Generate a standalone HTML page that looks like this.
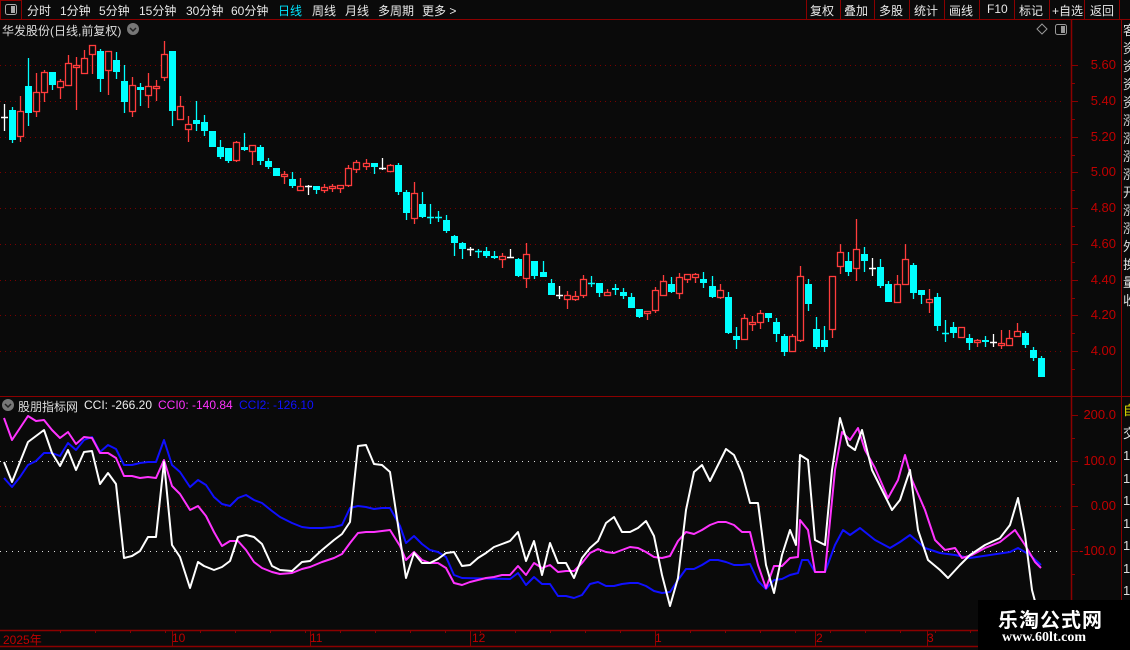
<!DOCTYPE html>
<html><head><meta charset="utf-8">
<style>
*{margin:0;padding:0;box-sizing:border-box}
body{width:1130px;height:650px;background:#0a0a0a;overflow:hidden;position:relative;font-family:"Liberation Sans","Noto Sans CJK SC",sans-serif;font-size:12px;color:#e8e8e8}
.t{position:absolute;white-space:nowrap}
svg{position:absolute;left:0;top:0}
</style></head><body>
<svg width="1130" height="650" id="s">
<!-- frame lines -->
<line x1="0" y1="19.5" x2="1130" y2="19.5" stroke="#8b0000"/>
<line x1="1071.5" y1="19" x2="1071.5" y2="646" stroke="#8b0000" stroke-width="1.5"/>
<line x1="1121.5" y1="19" x2="1121.5" y2="630" stroke="#8b0000"/>
<line x1="0" y1="396.5" x2="1130" y2="396.5" stroke="#8b0000"/>
<line x1="0" y1="630.5" x2="1130" y2="630.5" stroke="#8b0000" stroke-width="1.5"/>
<line x1="0" y1="646.5" x2="1130" y2="646.5" stroke="#8b0000" stroke-width="1.5"/>
<rect x="0.5" y="0.5" width="21" height="19" fill="none" stroke="#8b0000"/>
<rect x="5.5" y="4.5" width="11" height="10" rx="2" fill="none" stroke="#aaa"/>
<rect x="11" y="6" width="4" height="7" fill="#aaa"/>
<!-- right toolbar separators -->
<g stroke="#8b0000">
<line x1="806.5" y1="0" x2="806.5" y2="19"/><line x1="840.5" y1="0" x2="840.5" y2="19"/><line x1="874.5" y1="0" x2="874.5" y2="19"/><line x1="909.5" y1="0" x2="909.5" y2="19"/><line x1="944.5" y1="0" x2="944.5" y2="19"/><line x1="979.5" y1="0" x2="979.5" y2="19"/><line x1="1014.5" y1="0" x2="1014.5" y2="19"/><line x1="1049.5" y1="0" x2="1049.5" y2="19"/><line x1="1084.5" y1="0" x2="1084.5" y2="19"/><line x1="1119.5" y1="0" x2="1119.5" y2="19"/>
</g>
<!-- title icons -->
<circle cx="133" cy="29" r="6" fill="#777"/><path d="M130 28 L133 31 L136 28" stroke="#222" stroke-width="1.5" fill="none"/>
<path d="M1042 24 L1047 29 L1042 34 L1037 29 Z" fill="none" stroke="#999"/>
<rect x="1055.5" y="24.5" width="11" height="10" rx="2" fill="none" stroke="#999"/><rect x="1061" y="26" width="4" height="7" fill="#999"/>
<circle cx="8" cy="405" r="6" fill="#777"/><path d="M5 404 L8 407 L11 404" stroke="#222" stroke-width="1.5" fill="none"/>
<g id="grid"></g>
<g id="candles"></g>
<g id="ind" fill="none" stroke-width="2" stroke-linejoin="round"></g>
</svg>

<div class="t" style="left:27px;top:2px">分时</div>
<div class="t" style="left:60px;top:2px">1分钟</div>
<div class="t" style="left:99px;top:2px">5分钟</div>
<div class="t" style="left:139px;top:2px">15分钟</div>
<div class="t" style="left:186px;top:2px">30分钟</div>
<div class="t" style="left:231px;top:2px">60分钟</div>
<div class="t" style="left:278px;top:2px;color:#00e5ff">日线</div>
<div class="t" style="left:312px;top:2px">周线</div>
<div class="t" style="left:345px;top:2px">月线</div>
<div class="t" style="left:378px;top:2px">多周期</div>
<div class="t" style="left:422px;top:2px">更多 &gt;</div>
<div class="t" style="left:810px;top:2px">复权</div>
<div class="t" style="left:844px;top:2px">叠加</div>
<div class="t" style="left:879px;top:2px">多股</div>
<div class="t" style="left:914px;top:2px">统计</div>
<div class="t" style="left:949px;top:2px">画线</div>
<div class="t" style="left:987px;top:2px">F10</div>
<div class="t" style="left:1019px;top:2px">标记</div>
<div class="t" style="left:1052px;top:2px">+自选</div>
<div class="t" style="left:1090px;top:2px">返回</div>
<div class="t" style="left:2px;top:22px;color:#ddd">华发股份(日线,前复权)</div>
<div class="t" style="left:18px;top:398px;color:#ddd">股朋指标网</div>
<div class="t" style="left:84px;top:398px;color:#eee">CCI: -266.20</div>
<div class="t" style="left:158px;top:398px;color:#ff33ff">CCI0: -140.84</div>
<div class="t" style="left:239px;top:398px;color:#1010ff">CCI2: -126.10</div>

<div id="axis"></div>
<div class="t" style="left:1123px;top:22px;color:#ddd;font-size:13px;line-height:18px;width:7px;overflow:hidden">客<br>资<br>资<br>资<br>资<br>涨<br>涨<br>涨<br>涨<br>开<br>涨<br>涨<br>外<br>换<br>量<br>收</div>
<div class="t" style="left:1123px;top:400px;color:#ddd;font-size:13px;line-height:22.5px;width:7px;overflow:hidden"><span style="color:#e0e000">自</span><br>交<br>1<br>1<br>1<br>1<br>1<br>1<br>1<br>1</div>

<div class="t" style="left:3px;top:631px;color:#c00000;font-size:12px">2025年</div>
<div class="t" style="left:172px;top:631px;color:#c00000">10</div>
<div class="t" style="left:310px;top:631px;color:#c00000">11</div>
<div class="t" style="left:472px;top:631px;color:#c00000">12</div>
<div class="t" style="left:655px;top:631px;color:#c00000">1</div>
<div class="t" style="left:816px;top:631px;color:#c00000">2</div>
<div class="t" style="left:927px;top:631px;color:#c00000">3</div>

<div style="position:absolute;left:978px;top:600px;width:152px;height:50px;background:#000">
<div class="t" style="left:20px;top:4px;font-size:20px;font-weight:bold;color:#fff;letter-spacing:1px">乐淘公式网</div>
<div class="t" style="left:24px;top:30px;font-family:'Liberation Serif',serif;font-weight:bold;font-size:14px;color:#fff">www.60lt.com</div>
</div>

<script>
var NS="http://www.w3.org/2000/svg";
function el(p,n,a){var e=document.createElementNS(NS,n);for(var k in a)e.setAttribute(k,a[k]);p.appendChild(e);return e;}
var g=document.getElementById('grid');
var py=[65,101,137,172,208,244,280,315,351],pl=["5.60","5.40","5.20","5.00","4.80","4.60","4.40","4.20","4.00"];
var ax=document.getElementById('axis'),h="";
py.forEach(function(y,i){el(g,'line',{x1:0,y1:y+.5,x2:1062,y2:y+.5,stroke:'#7a0000','stroke-dasharray':'1 4'});
el(g,'line',{x1:1071,y1:y+.5,x2:1078,y2:y+.5,stroke:'#8b0000'});el(g,'line',{x1:1071,y1:y+18.5,x2:1075,y2:y+18.5,stroke:'#8b0000'});
h+='<div class="t" style="left:1070px;width:46px;text-align:right;top:'+(y-8)+'px;color:#c00000;font-size:13px">'+pl[i]+'</div>';});
var iy=[415,461,506,551],il=["200.0","100.0","0.00","-100.0"];
iy.forEach(function(y,i){el(g,'line',{x1:1071,y1:y+.5,x2:1078,y2:y+.5,stroke:'#8b0000'});el(g,'line',{x1:1071,y1:y+23.5,x2:1075,y2:y+23.5,stroke:'#8b0000'});
h+='<div class="t" style="left:1060px;width:56px;text-align:right;top:'+(y-8)+'px;color:#c00000;font-size:13px">'+il[i]+'</div>';});
ax.innerHTML=h;
el(g,'line',{x1:0,y1:461.5,x2:1062,y2:461.5,stroke:'#ddd','stroke-dasharray':'1 5'});
el(g,'line',{x1:0,y1:551.5,x2:1062,y2:551.5,stroke:'#ddd','stroke-dasharray':'1 5'});
el(g,'line',{x1:0,y1:506.5,x2:1062,y2:506.5,stroke:'#7a0000','stroke-dasharray':'1 4'});
[172,310,470,655,815,927].forEach(function(x){el(g,'line',{x1:x+.5,y1:630,x2:x+.5,y2:646,stroke:'#8b0000'});});
for(var x=60;x<1060;x+=35)el(g,'line',{x1:x+.5,y1:630,x2:x+.5,y2:633,stroke:'#8b0000'});
// candles: x,type(c cyan,r red,w white),bodyTop,bodyBot,wickTop,wickBot
var C=[[4,'w',117,117,104,131],[12,'c',110,140,107,143],[20,'r',111,136,96,142],[28,'c',86,113,58,126],[36,'r',92,111,73,117],[44,'r',72,92,70,102],[52,'c',72,85,72,90],[60,'r',81,87,79,99],[68,'r',63,85,55,85],[76,'r',65,67,57,110],[84,'r',58,73,50,74],[92,'r',45,54,45,74],[100,'c',51,79,49,92],[108,'r',51,70,51,95],[116,'c',60,72,52,79],[124,'c',81,102,65,113],[132,'r',85,111,77,117],[140,'c',87,90,83,106],[148,'r',86,95,73,108],[156,'r',86,88,80,101],[164,'r',54,77,41,81],[172,'c',51,111,51,126],[180,'r',106,119,96,119],[188,'r',124,129,116,142],[196,'c',120,124,101,131],[204,'c',122,131,115,136],[212,'c',131,147,131,147],[220,'c',147,157,140,159],[228,'c',148,161,148,163],[236,'r',142,160,141,162],[244,'c',147,150,133,151],[252,'r',145,151,145,165],[260,'c',147,161,145,165],[268,'c',161,167,158,169],[276,'c',168,176,168,176],[284,'r',174,176,171,184],[292,'c',179,186,172,188],[300,'r',186,190,178,190],[308,'w',186,186,185,195],[316,'c',186,190,186,194],[324,'r',187,190,184,193],[332,'r',186,188,184,192],[340,'r',185,188,185,193],[348,'r',168,185,165,187],[356,'r',162,169,160,173],
[366,'r',163,166,159,170],[374,'c',163,167,163,174],[382,'w',168,168,158,170],[390,'r',165,171,164,171],[398,'c',165,192,163,195],[406,'c',192,213,190,220],[414,'r',193,218,182,224],[422,'c',204,217,192,218],[430,'c',217,218,204,224],[438,'c',217,218,211,222],[446,'c',220,231,215,233],[454,'c',236,243,235,256],[462,'c',243,249,242,259],[470,'w',249,249,247,256],[478,'c',251,252,249,258],[486,'c',251,256,247,258],[494,'c',256,258,251,259],[502,'r',256,259,253,268],[510,'w',257,257,249,258],[518,'c',259,276,258,277],[526,'r',254,278,243,288],[534,'c',261,276,261,279],[543,'c',272,277,261,277],[551,'c',283,295,279,295],[559,'w',295,295,286,299],[567,'r',295,299,291,309],[575,'r',296,299,291,301],[583,'r',279,295,275,298],[591,'c',283,284,276,287],[599,'c',283,293,283,297],[607,'r',292,295,289,295],[615,'c',288,290,284,295],[623,'c',292,296,288,299],[631,'c',297,308,293,308],[639,'c',309,317,309,318],[647,'r',311,313,311,320],[655,'r',290,310,287,313],[663,'r',281,295,275,296],[671,'c',284,292,277,293],[679,'r',277,293,273,299],[687,'r',274,279,274,283],[695,'r',274,277,273,283],[703,'c',279,283,272,288],[712,'c',286,297,276,298],[720,'r',290,297,284,299],[728,'c',297,333,292,334],[736,'c',336,340,327,349],[744,'r',318,339,314,340],[752,'r',322,324,316,331],[760,'r',313,322,310,329],[768,'c',313,318,313,322],[776,'c',322,334,318,342],[784,'c',336,352,334,356],[792,'r',336,351,334,352],[800,'r',276,340,266,342],[808,'c',284,304,279,311],[816,'c',329,347,317,349],[824,'c',340,347,326,352],[832,'r',276,329,276,338],[840,'r',252,266,244,274],[848,'c',261,272,252,276],[856,'r',249,268,219,281],[864,'c',254,261,247,272],[872,'w',268,268,258,276],[880,'c',267,286,259,288],[888,'c',284,302,281,302],[897,'r',284,302,275,302],[905,'r',259,284,244,285],[913,'c',265,293,263,299],[921,'c',290,295,290,304],[929,'r',299,302,289,313],[937,'c',297,326,293,331],[945,'c',333,334,320,342],[953,'c',327,333,322,338],[961,'r',327,337,327,338],[969,'c',338,343,334,350],[977,'r',340,342,339,347],[985,'c',340,342,336,347],[993,'w',342,342,334,347],[1001,'r',343,345,330,349],[1009,'r',338,345,330,345],[1017,'r',331,336,323,337],[1025,'c',333,345,331,348],[1033,'c',350,358,347,361],[1041,'c',358,377,356,377]];
var cg=document.getElementById('candles');
C.forEach(function(d){var x=d[0],col=d[1]=='c'?'#00ffff':d[1]=='r'?'#ff3c3c':'#ffffff';
if(d[1]=='r'){el(cg,'line',{x1:x+.5,y1:d[4],x2:x+.5,y2:d[2],stroke:col,'stroke-width':1.3});el(cg,'line',{x1:x+.5,y1:d[3],x2:x+.5,y2:d[5],stroke:col,'stroke-width':1.3});
el(cg,'rect',{x:x-2.5,y:d[2]+.5,width:6,height:Math.max(1,d[3]-d[2]),fill:'#0a0a0a',stroke:col,'stroke-width':1.3});}
else{el(cg,'line',{x1:x+.5,y1:d[4],x2:x+.5,y2:d[5],stroke:col,'stroke-width':1.3});
if(d[3]-d[2]<=1)el(cg,'line',{x1:x-3,y1:d[2]+.5,x2:x+4,y2:d[2]+.5,stroke:col,'stroke-width':1.5});
else el(cg,'rect',{x:x-3,y:d[2],width:7,height:d[3]-d[2],fill:col});}});
var W=[[4,462],[12,482],[28,442],[44,430],[52,453],[60,466],[68,450],[76,470],[84,452],[92,451],[100,484],[108,473],[116,484],[124,558],[132,556],[140,551],[148,537],[156,537],[164,462],[172,545],[180,557],[190,588],[198,562],[204,566],[214,570],[222,567],[230,561],[238,537],[246,535],[254,537],[262,544],[272,566],[280,570],[292,571],[302,562],[310,561],[322,550],[334,540],[342,534],[350,522],[358,446],[366,445],[374,464],[382,465],[390,472],[398,525],[406,578],[414,553],[422,563],[430,563],[438,559],[446,553],[454,552],[462,566],[470,565],[478,558],[486,553],[494,547],[502,544],[510,541],[518,532],[526,561],[534,541],[542,575],[550,543],[558,563],[566,563],[574,578],[582,558],[590,548],[598,541],[606,523],[614,517],[622,532],[630,532],[638,528],[646,521],[654,536],[662,575],[670,606],[678,578],[686,510],[694,472],[702,465],[710,481],[718,465],[726,449],[734,455],[742,473],[750,503],[758,503],[766,565],[774,593],[782,555],[790,530],[796,545],[800,455],[808,460],[815,540],[825,545],[832,470],[840,418],[848,445],[855,450],[862,430],[872,470],[882,490],[892,510],[900,500],[910,470],[918,530],[928,560],[940,570],[948,578],[960,565],[970,555],[985,545],[1000,538],[1010,525],[1018,498],[1025,535],[1032,590],[1036,605]];
var M=[[4,418],[12,440],[28,416],[36,421],[44,420],[52,430],[60,438],[68,432],[76,444],[84,437],[92,438],[100,453],[108,453],[116,458],[124,476],[132,476],[140,478],[148,477],[156,478],[164,460],[172,486],[180,494],[190,510],[198,506],[206,516],[214,532],[222,546],[230,541],[238,541],[246,550],[254,562],[262,568],[272,572],[280,574],[292,573],[302,569],[310,567],[322,562],[334,558],[342,554],[350,543],[358,533],[366,532],[374,532],[382,531],[390,530],[400,546],[406,560],[414,552],[422,560],[430,563],[438,563],[446,568],[454,583],[462,585],[470,582],[478,580],[486,578],[494,577],[502,575],[510,575],[518,566],[526,575],[534,563],[542,568],[550,565],[558,572],[566,571],[574,571],[582,563],[590,553],[598,549],[606,552],[614,553],[622,550],[630,547],[638,548],[646,552],[654,557],[662,558],[670,556],[678,541],[686,532],[694,534],[702,530],[710,525],[718,522],[726,522],[734,525],[742,532],[750,532],[758,565],[766,588],[774,566],[782,566],[790,558],[798,557],[800,520],[808,530],[815,572],[825,572],[835,470],[842,432],[850,440],[858,428],[865,450],[875,468],[888,498],[898,480],[905,455],[912,480],[925,510],[935,540],[945,550],[955,548],[962,558],[972,555],[985,548],[1000,542],[1015,530],[1025,545],[1035,562],[1041,568]];
var B=[[4,478],[12,487],[20,477],[28,465],[36,461],[44,453],[52,453],[60,456],[68,443],[76,450],[84,440],[92,437],[100,452],[108,445],[116,449],[124,465],[132,465],[140,463],[148,462],[156,462],[164,440],[172,465],[180,472],[190,487],[198,480],[206,485],[214,497],[222,504],[230,506],[238,498],[246,495],[254,500],[262,503],[272,511],[280,517],[292,523],[302,527],[310,528],[322,528],[334,527],[342,525],[350,508],[358,506],[366,507],[374,509],[382,508],[390,508],[400,526],[406,543],[414,536],[422,544],[430,550],[438,552],[446,557],[454,575],[462,578],[510,579],[518,573],[526,585],[534,577],[542,584],[550,584],[558,596],[566,596],[574,598],[582,595],[590,584],[598,582],[606,586],[614,586],[622,584],[630,583],[638,583],[646,586],[654,591],[662,593],[670,592],[678,580],[686,569],[694,569],[702,565],[710,560],[718,560],[726,562],[734,565],[742,565],[750,564],[758,581],[766,589],[774,580],[782,579],[790,575],[798,573],[802,560],[808,560],[815,572],[825,572],[835,545],[843,530],[850,535],[860,528],[875,540],[890,548],[900,542],[910,535],[925,548],[940,553],[955,555],[970,558],[990,555],[1010,552],[1018,548],[1030,555],[1041,565]];
var ig=document.getElementById('ind');
function pl2(a,c){el(ig,'polyline',{points:a.map(function(p){return p.join(',')}).join(' '),stroke:c});}
pl2(B,'#1010ff');pl2(M,'#ff33ff');pl2(W,'#ffffff');
</script>
</body></html>
